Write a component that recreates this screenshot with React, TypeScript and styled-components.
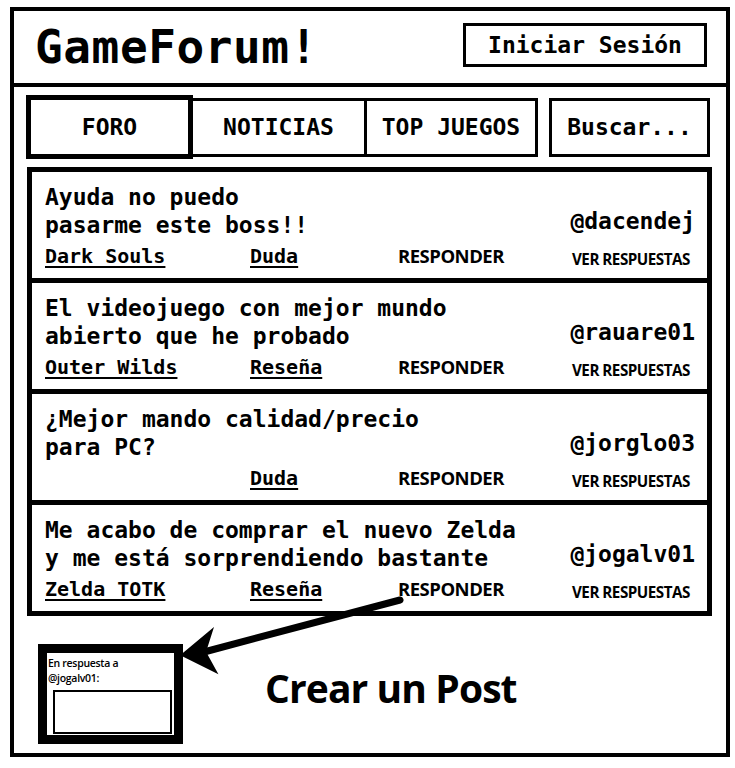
import styled, { createGlobalStyle } from "styled-components";

const mono = `"DejaVu Sans Mono", "Liberation Mono", monospace`;
const sans = `"Open Sans", "Noto Sans", sans-serif`;

const GlobalStyle = createGlobalStyle`
  body {
    margin: 0;
    background: #fff;
    color: #000;
  }
`;

const Page = styled.div`
  position: relative;
  width: 735px;
  height: 768px;
  padding: 7px 0 0 10px;
  box-sizing: border-box;
`;

const Frame = styled.div`
  width: 720px;
  height: 750px;
  box-sizing: border-box;
  border: 4px solid #000;
  display: flex;
  flex-direction: column;
`;

const Header = styled.header`
  height: 76px;
  box-sizing: border-box;
  border-bottom: 4px solid #000;
  display: flex;
  align-items: center;
  justify-content: space-between;
  padding: 0 19px 0 21px;
`;

const Title = styled.h1`
  margin: 0;
  font-family: ${mono};
  font-weight: bold;
  font-size: 46px;
  letter-spacing: 0.6px;
  line-height: 1;
`;

const LoginButton = styled.div`
  width: 244px;
  height: 44px;
  box-sizing: border-box;
  border: 3px solid #000;
  margin-bottom: 4px;
  display: flex;
  align-items: center;
  justify-content: center;
  font-family: ${mono};
  font-weight: bold;
  font-size: 23px;
`;

const Nav = styled.nav`
  display: flex;
  align-items: center;
  padding: 8px 0 0 12px;
`;

const Tab = styled.div<{ $active?: boolean; $width: number }>`
  position: relative;
  z-index: ${p => (p.$active ? 1 : 0)};
  width: ${p => p.$width}px;
  height: ${p => (p.$active ? 64 : 59)}px;
  box-sizing: border-box;
  border: ${p => (p.$active ? 5 : 3)}px solid #000;
  display: flex;
  align-items: center;
  justify-content: center;
  font-family: ${mono};
  font-weight: bold;
  font-size: 23px;
  & + & {
    margin-left: -3px;
  }
`;

const SearchBox = styled.div`
  width: 161px;
  height: 59px;
  box-sizing: border-box;
  border: 3px solid #000;
  margin-left: 11px;
  display: flex;
  align-items: center;
  justify-content: center;
  font-family: ${mono};
  font-weight: bold;
  font-size: 23px;
`;

const PostList = styled.div`
  width: 685px;
  box-sizing: border-box;
  margin: 8px 0 0 13px;
  border: 5px solid #000;
`;

const Post = styled.article`
  padding: 11px 12px 10px 13px;
  & + & {
    border-top: 5px solid #000;
  }
`;

const PostTop = styled.div`
  display: flex;
  justify-content: space-between;
  align-items: flex-end;
`;

const PostTitle = styled.div`
  font-family: ${mono};
  font-weight: bold;
  font-size: 23px;
  line-height: 28px;
`;

const User = styled.div`
  font-family: ${mono};
  font-weight: bold;
  font-size: 23px;
  line-height: 28px;
  padding-bottom: 4px;
`;

const Meta = styled.div`
  display: grid;
  grid-template-columns: 205px 148px 174px 1fr;
  align-items: center;
  height: 24px;
  margin-top: 5px;
`;

const TagLink = styled.span`
  font-family: ${mono};
  font-weight: bold;
  font-size: 20px;
  line-height: 24px;
  text-decoration: underline;
  text-decoration-thickness: 2px;
  text-underline-offset: 3px;
`;

const Action = styled.span<{ $small?: boolean }>`
  font-family: ${sans};
  font-weight: 700;
  font-size: ${p => (p.$small ? 15.2 : 18.5)}px;
  letter-spacing: -0.5px;
  line-height: 18px;
  padding-top: ${p => (p.$small ? 6 : 0)}px;
`;

const Bottom = styled.div`
  flex: 1;
  display: flex;
  align-items: flex-start;
  padding: 28px 0 0 24px;
`;

const ReplyBox = styled.div`
  width: 145px;
  height: 100px;
  box-sizing: border-box;
  border: 9px solid #000;
  padding: 3px 0 0 1px;
`;

const ReplyLabel = styled.div`
  font-family: ${sans};
  font-weight: 600;
  font-size: 10.5px;
  line-height: 15px;
  letter-spacing: -0.3px;
`;

const ReplyInput = styled.div`
  width: 119px;
  height: 44px;
  box-sizing: border-box;
  border: 2px solid #000;
  margin: 4px 0 0 5px;
`;

const CreatePost = styled.div`
  align-self: center;
  margin: 0 0 22px 82px;
  font-family: ${sans};
  font-weight: 700;
  font-size: 39px;
  letter-spacing: -0.9px;
`;

const Arrow = styled.svg`
  position: absolute;
  left: 0;
  top: 0;
  pointer-events: none;
`;

interface PostData {
  lines: string[];
  user: string;
  game?: string;
  kind: string;
}

const posts: PostData[] = [
  { lines: ["Ayuda no puedo", "pasarme este boss!!"], user: "@dacendej", game: "Dark Souls", kind: "Duda" },
  { lines: ["El videojuego con mejor mundo", "abierto que he probado"], user: "@rauare01", game: "Outer Wilds", kind: "Reseña" },
  { lines: ["¿Mejor mando calidad/precio", "para PC?"], user: "@jorglo03", kind: "Duda" },
  { lines: ["Me acabo de comprar el nuevo Zelda", "y me está sorprendiendo bastante"], user: "@jogalv01", game: "Zelda TOTK", kind: "Reseña" },
];

const App = () => {
  return (
    <Page>
      <GlobalStyle />
      <Frame>
        <Header>
          <Title>GameForum!</Title>
          <LoginButton>Iniciar Sesión</LoginButton>
        </Header>
        <Nav>
          <Tab $active $width={167}>FORO</Tab>
          <Tab $width={177}>NOTICIAS</Tab>
          <Tab $width={174}>TOP JUEGOS</Tab>
          <SearchBox>Buscar...</SearchBox>
        </Nav>
        <PostList>
          {posts.map(post => (
            <Post key={post.user}>
              <PostTop>
                <PostTitle>
                  {post.lines[0]}
                  <br />
                  {post.lines[1]}
                </PostTitle>
                <User>{post.user}</User>
              </PostTop>
              <Meta>
                <span>{post.game && <TagLink>{post.game}</TagLink>}</span>
                <span>
                  <TagLink>{post.kind}</TagLink>
                </span>
                <Action>RESPONDER</Action>
                <Action $small>VER RESPUESTAS</Action>
              </Meta>
            </Post>
          ))}
        </PostList>
        <Bottom>
          <ReplyBox>
            <ReplyLabel>
              En respuesta a
              <br />
              @jogalv01:
            </ReplyLabel>
            <ReplyInput />
          </ReplyBox>
          <CreatePost>Crear un Post</CreatePost>
        </Bottom>
      </Frame>
      <Arrow width="735" height="768" viewBox="0 0 735 768">
        <line x1="400" y1="600" x2="204" y2="652" stroke="#000" strokeWidth="7" strokeLinecap="round" />
        <path d="M182 655 L212 630 L205 652 L216 672 Z" fill="#000" stroke="#000" strokeWidth="2" strokeLinejoin="miter" />
      </Arrow>
    </Page>
  );
};

export default App;
